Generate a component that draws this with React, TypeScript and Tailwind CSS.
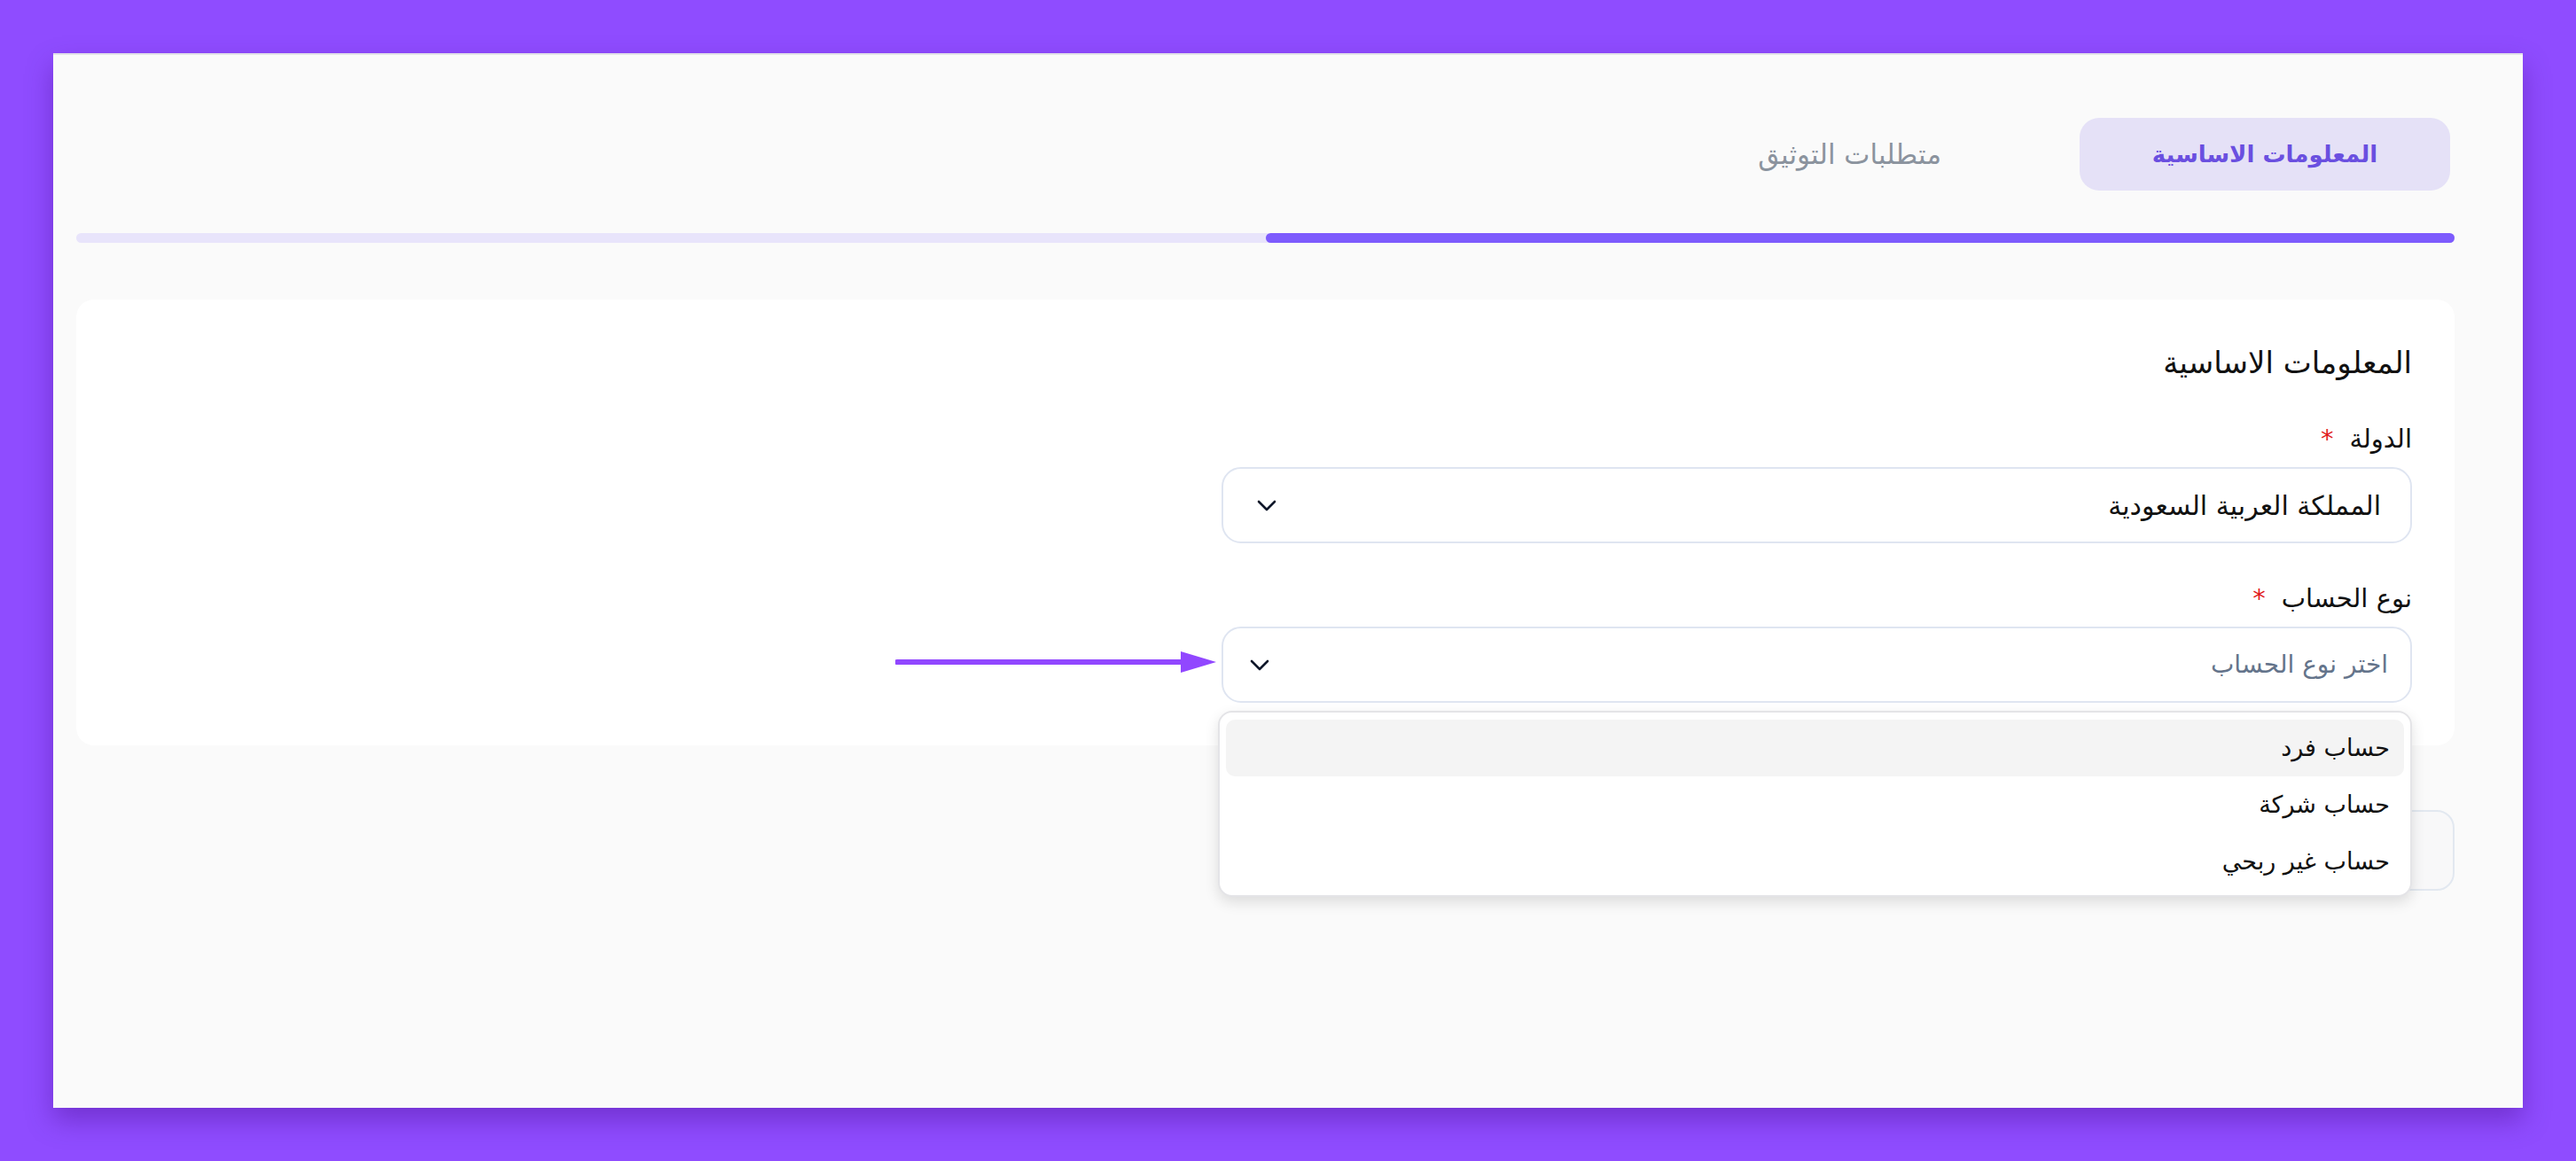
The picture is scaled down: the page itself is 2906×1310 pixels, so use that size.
import React from "react";

const font = { fontFamily: '"DejaVu Sans", "Noto Sans", sans-serif' };

function Chevron() {
  return (
    <svg width="22" height="13" viewBox="0 0 22 13" fill="none">
      <path d="M2 2l9 9 9-9" stroke="#0f172a" strokeWidth="2.6" strokeLinecap="round" strokeLinejoin="round" />
    </svg>
  );
}

function Label({ text }: { text: string }) {
  return (
    <div className="flex items-center gap-[18px] text-[29px] leading-[36px] font-medium text-[#111]">
      <span>{text}</span>
      <span className="text-[#e11d1d]">*</span>
    </div>
  );
}

const options = ["حساب فرد", "حساب شركة", "حساب غير ربحي"];

export default function App() {
  return (
    <div className="w-[2906px] h-[1310px] bg-[#8f4cff] p-[60px] relative" style={font}>
      <div
        dir="rtl"
        className="w-[2786px] h-[1190px] bg-[#fafafa] border-t-2 border-[#e2e2e8] shadow-[0_14px_28px_rgba(60,0,120,0.35)] pt-[71px] pr-[77px] pl-[26px]"
      >
        {/* tabs */}
        <div className="flex items-center gap-[156px] mr-[5px]">
          <button className="w-[418px] h-[82px] rounded-[22px] bg-[#e5e1f7] text-[#6a4fe0] text-[26px] font-bold">
            المعلومات الاساسية
          </button>
          <button className="text-[31px] font-normal text-[#8b939e]">متطلبات التوثيق</button>
        </div>

        {/* progress */}
        <div className="mt-[48px] h-[11px] rounded-full bg-[#e8e4fb]">
          <div className="h-full w-1/2 rounded-full bg-[#7d5bfd]" />
        </div>

        {/* card */}
        <div className="mt-[64px] h-[503px] bg-white rounded-[20px] pr-[48px] pt-[51px]">
          <h2 className="text-[34px] leading-[40px] font-normal text-[#111]">المعلومات الاساسية</h2>

          <div className="mt-[48px]">
            <Label text="الدولة" />
            <div className="mt-[14px] w-[1343px] h-[86px] border-2 border-[#dfe5f1] rounded-[22px] flex items-center justify-between pr-[33px] pl-[38px]">
              <span className="text-[30px] text-[#111]">المملكة العربية السعودية</span>
              <Chevron />
            </div>
          </div>

          <div className="mt-[44px]">
            <Label text="نوع الحساب" />
            <div className="relative mt-[14px] w-[1343px]">
              <div className="h-[86px] border-2 border-[#dfe5f1] rounded-[22px] flex items-center justify-between pr-[25px] pl-[30px]">
                <span className="text-[28px] text-[#64748b]">اختر نوع الحساب</span>
                <Chevron />
              </div>
              <div className="absolute top-[95px] right-0 w-[1347px] h-[210px] bg-white border-2 border-[#e4e4e7] rounded-[16px] shadow-[0_6px_16px_rgba(0,0,0,0.12)] pt-[8px] px-[7px] z-10">
                {options.map((o, i) => (
                  <div
                    key={o}
                    className={`h-[64px] rounded-[10px] flex items-center pr-[16px] text-[27px] text-[#111] ${
                      i === 0 ? "bg-[#f4f4f4]" : ""
                    }`}
                  >
                    {o}
                  </div>
                ))}
              </div>
            </div>
          </div>
        </div>

        {/* button behind dropdown */}
        <div className="mt-[73px] w-[640px] h-[91px] border-2 border-[#e2e8f0] rounded-[20px] bg-[#f8f8f9]" />
      </div>

      {/* annotation arrow */}
      <svg className="absolute left-[1010px] top-[732px]" width="364" height="30" viewBox="0 0 364 30">
        <line x1="2" y1="15" x2="326" y2="15" stroke="#9147ff" strokeWidth="6" strokeLinecap="round" />
        <polygon points="322,3 362,15 322,27" fill="#9147ff" />
      </svg>
    </div>
  );
}
